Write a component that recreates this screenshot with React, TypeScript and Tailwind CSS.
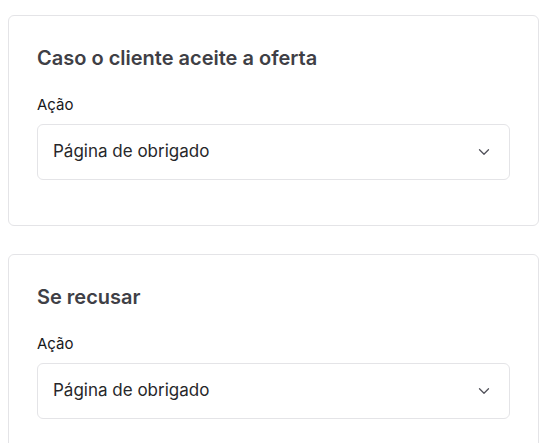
import { ChevronDown } from 'lucide-react'

function ActionCard({ title }: { title: string }) {
  return (
    <section className="rounded-md border border-[#e4e4e7] bg-white px-7 pt-[28px] pb-[45px]">
      <h2 className="text-[20px] leading-7 font-semibold text-[#3f3f46]">{title}</h2>
      <label className="mt-[23px] block text-[15px] leading-5 text-[#18181b]">Ação</label>
      <div className="mt-[9px] flex h-14 items-center justify-between rounded-md border border-[#e4e4e7] bg-white pl-[15px] pr-4">
        <span className="text-[17px] text-[#27272a]">Página de obrigado</span>
        <ChevronDown size={18} strokeWidth={1.75} className="text-[#52525b]" />
      </div>
    </section>
  )
}

export default function App() {
  return (
    <div className="min-h-screen bg-white font-['Inter',sans-serif]">
      <div className="ml-2 w-[531px] pt-[15px] flex flex-col gap-7">
        <ActionCard title="Caso o cliente aceite a oferta" />
        <ActionCard title="Se recusar" />
      </div>
    </div>
  )
}
